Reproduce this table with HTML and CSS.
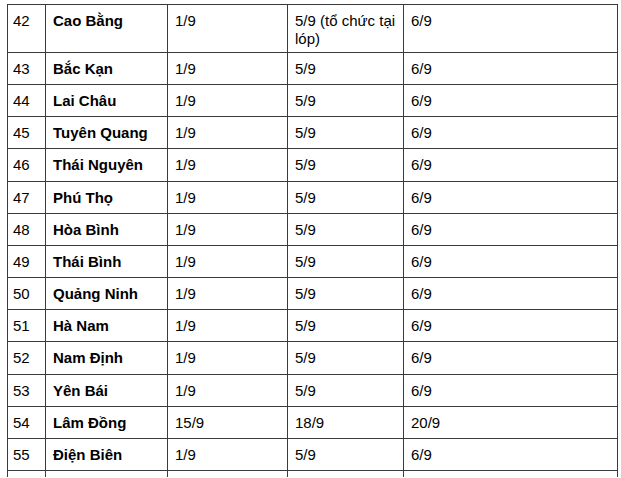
FILE: index.html
```html
<!DOCTYPE html>
<html>
<head>
<meta charset="utf-8">
<link rel="stylesheet" href="styles.css">
</head>
<body>
<table class="schedule">
  <colgroup>
    <col class="c-no"><col class="c-name"><col class="c-a"><col class="c-b"><col class="c-c">
  </colgroup>
  <tbody>
    <tr class="tall"><td>42</td><td class="name">Cao Bằng</td><td>1/9</td><td>5/9 (tổ chức tại lóp)</td><td>6/9</td></tr>
    <tr><td>43</td><td class="name">Bắc Kạn</td><td>1/9</td><td>5/9</td><td>6/9</td></tr>
    <tr><td>44</td><td class="name">Lai Châu</td><td>1/9</td><td>5/9</td><td>6/9</td></tr>
    <tr><td>45</td><td class="name">Tuyên Quang</td><td>1/9</td><td>5/9</td><td>6/9</td></tr>
    <tr><td>46</td><td class="name">Thái Nguyên</td><td>1/9</td><td>5/9</td><td>6/9</td></tr>
    <tr><td>47</td><td class="name">Phú Thọ</td><td>1/9</td><td>5/9</td><td>6/9</td></tr>
    <tr><td>48</td><td class="name">Hòa Bình</td><td>1/9</td><td>5/9</td><td>6/9</td></tr>
    <tr><td>49</td><td class="name">Thái Bình</td><td>1/9</td><td>5/9</td><td>6/9</td></tr>
    <tr><td>50</td><td class="name">Quảng Ninh</td><td>1/9</td><td>5/9</td><td>6/9</td></tr>
    <tr><td>51</td><td class="name">Hà Nam</td><td>1/9</td><td>5/9</td><td>6/9</td></tr>
    <tr><td>52</td><td class="name">Nam Định</td><td>1/9</td><td>5/9</td><td>6/9</td></tr>
    <tr><td>53</td><td class="name">Yên Bái</td><td>1/9</td><td>5/9</td><td>6/9</td></tr>
    <tr><td>54</td><td class="name">Lâm Đồng</td><td>15/9</td><td>18/9</td><td>20/9</td></tr>
    <tr><td>55</td><td class="name">Điện Biên</td><td>1/9</td><td>5/9</td><td>6/9</td></tr>
    <tr class="stub"><td></td><td></td><td></td><td></td><td></td></tr>
  </tbody>
</table>
</body>
</html>
```

FILE: styles.css
```css
html, body {
  margin: 0;
  padding: 0;
  background: #ffffff;
}

body {
  padding: 4px 0 0 7px;
  font-family: "Liberation Sans", Arial, sans-serif;
  font-size: 15px;
  color: #000000;
  overflow: hidden;
}

.schedule {
  border-collapse: collapse;
  table-layout: fixed;
  width: 610px;
}

.c-no { width: 38px; }
.c-name { width: 122px; }
.c-a { width: 120px; }
.c-b { width: 116px; }
.c-c { width: 214px; }

.schedule td {
  border: 1px solid #3a3a3a;
  padding: 7px 7px 6px 7px;
  line-height: 18px;
  height: 18.16px;
  vertical-align: top;
  box-sizing: content-box;
}

.schedule td:first-child {
  padding-left: 5px;
}

.schedule tr.tall td {
  height: 36px;
  padding-top: 7px;
  padding-bottom: 4px;
}

.schedule tr.stub td {
  height: 6px;
  padding: 0;
  border-bottom: none;
}

.schedule td.name {
  font-weight: bold;
}
```
